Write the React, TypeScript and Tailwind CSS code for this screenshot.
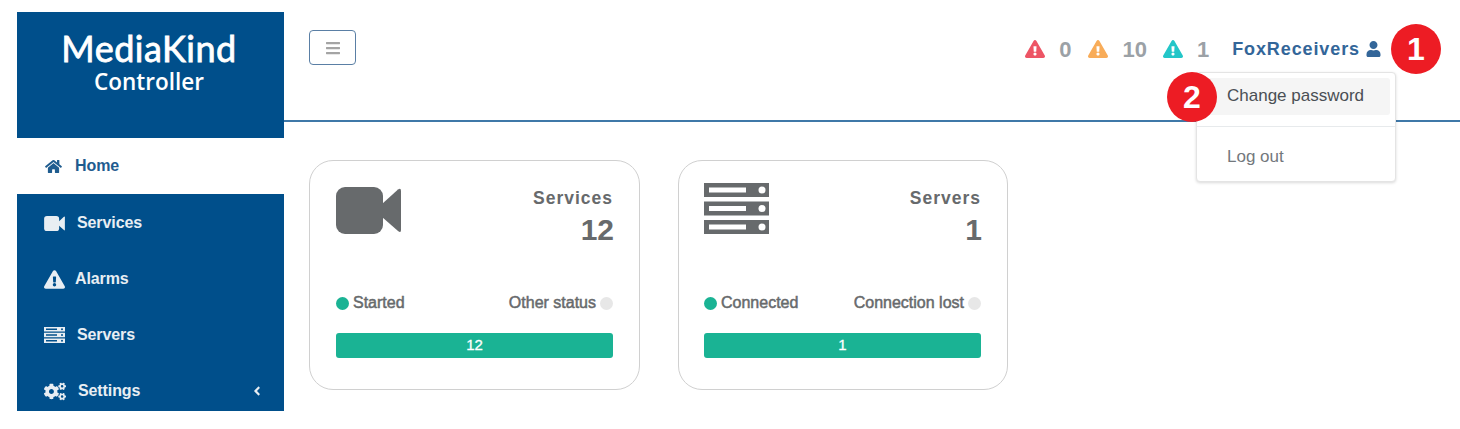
import React from 'react';
import { FaAngleLeft, FaBars, FaCogs, FaExclamationTriangle, FaHome, FaUser } from 'react-icons/fa';

const VideoIcon: React.FC<{ className?: string }> = ({ className }) => (
  <svg viewBox="0 0 65 47" className={className} fill="currentColor">
    <rect x="0" y="0" width="47" height="47" rx="9" />
    <path d="M46 17 L62 2.5 Q65 0.5 65 4 V43 Q65 46.5 62 44 L46 30 Z" />
  </svg>
);

const ServerIcon: React.FC<{ className?: string }> = ({ className }) => (
  <svg viewBox="0 0 65 51" className={className} fill="#676a6c">
    {[0, 18.5, 37].map((y) => (
      <g key={y}>
        <rect x="0" y={y} width="65" height="14" />
        <rect x="5" y={y + 4.5} width="37" height="5" fill="#fff" />
        <circle cx="58" cy={y + 7} r="3.5" fill="#fff" />
      </g>
    ))}
  </svg>
);

function ServerWhite() {
  return (
    <svg viewBox="0 0 21 16" className="w-[21px] h-[16px]" fill="#e8eef3">
      {[0, 5.75, 11.5].map((y) => (
        <g key={y}>
          <rect x="0" y={y} width="21" height="4.5" />
          <rect x="2" y={y + 1.5} width="11" height="1.5" fill="#004f8b" />
          <circle cx="18" cy={y + 2.25} r="1" fill="#004f8b" />
        </g>
      ))}
    </svg>
  );
}

const navItems = [
  { label: 'Services', icon: <VideoIcon className="w-[21px] h-[15px]" />, gap: 'ml-[12px]' },
  { label: 'Alarms', icon: <FaExclamationTriangle className="w-[21px] h-[19px]" />, gap: 'ml-[10px]' },
  { label: 'Servers', icon: <ServerWhite />, gap: 'ml-[12px]' },
  { label: 'Settings', icon: <FaCogs className="w-[22px] h-[19px]" />, gap: 'ml-[12px]' },
];

const Sidebar: React.FC = () => (
  <aside className="w-[267px] shrink-0">
    <div className="h-[126px] bg-[#004f8b] flex flex-col items-center pt-[16px] pr-[3px] text-white">
      <div className="font-['Lato',sans-serif] text-[36px] leading-[40px] tracking-[0.5px] [-webkit-text-stroke:0.8px_white]">MediaKind</div>
      <div className="font-['Open_Sans',sans-serif] font-semibold text-[22.5px] leading-[28px]">Controller</div>
    </div>
    <div className="h-[56px] flex items-center pl-[28px] text-[#1f5c8f] text-[16px] font-bold tracking-[-0.1px]">
      <FaHome className="w-[17px] h-[15px]" />
      <span className="ml-[13px]">Home</span>
    </div>
    <nav className="h-[217px] bg-[#004f8b] pt-[1px]">
      {navItems.map((item) => (
        <div key={item.label} className="h-[56px] flex items-center pl-[27px] pr-[22px] text-[#e8eef3] text-[16px] font-bold tracking-[-0.1px]">
          {item.icon}
          <span className={item.gap}>{item.label}</span>
          {item.label === 'Settings' && <FaAngleLeft className="ml-auto w-[10px] h-[14px]" />}
        </div>
      ))}
    </nav>
  </aside>
);

const Alert: React.FC<{ color: string; count: string; gap: string }> = ({ color, count, gap }) => (
  <div className={`flex items-center ${gap}`}>
    <FaExclamationTriangle className={`w-[20px] h-[18px] ${color}`} />
    <span className="ml-[14px] text-[22px] font-bold text-[#9ba1a6]">{count}</span>
  </div>
);

const Badge: React.FC<{ className: string; children: React.ReactNode }> = ({ className, children }) => (
  <div className={`absolute ${className} z-20 w-[50px] h-[50px] rounded-full bg-[#ed1c24] text-white text-[32px] font-bold flex items-center justify-center`}>
    {children}
  </div>
);

const Header: React.FC = () => (
  <header className="relative h-[110px] border-b-2 border-[#3f78a8] flex items-start pl-[25px]">
    <button className="mt-[18px] w-[47px] h-[35px] rounded-[4px] border border-[#5a7fa5] flex items-center justify-center text-[#a4a4a4]">
      <FaBars className="w-[16px] h-[16px]" />
    </button>
    <div className="ml-auto mt-[27px] mr-[79px] flex items-center h-[20px]">
      <Alert color="text-[#ed5565]" count="0" gap="" />
      <Alert color="text-[#f8ac59]" count="10" gap="ml-[17px]" />
      <Alert color="text-[#23c6c8]" count="1" gap="ml-[16px]" />
      <span className="ml-[23px] text-[18px] font-bold tracking-[0.9px] text-[#336699]">FoxReceivers</span>
      <FaUser className="ml-[6px] w-[15px] h-[16px] text-[#336699]" />
    </div>

    {/* user menu */}
    <div className="absolute left-[912px] top-[60px] w-[200px] h-[110px] bg-white rounded-[4px] border border-[#e4e4e4] shadow-[0_1px_3px_rgba(0,0,0,0.15)] pt-[5px] z-10">
      <div className="mx-[5px] h-[37px] bg-[#f5f5f5] rounded-[3px] pl-[25px] pb-[2px] flex items-center text-[17px] text-[#4a4f54]">
        Change password
      </div>
      <div className="mt-[11px] border-t border-[#e7eaec]" />
      <div className="mt-[12px] pl-[30px] text-[17px] leading-[36px] text-[#73787d]">Log out</div>
    </div>

    <Badge className="left-[1107px] top-[12px]">1</Badge>
    <Badge className="left-[883px] top-[60px]">2</Badge>
  </header>
);

const StatCard: React.FC<{
  icon: React.ReactNode;
  title: string;
  count: string;
  okLabel: string;
  badLabel: string;
  sizeClass: string;
}> = ({ icon, title, count, okLabel, badLabel, sizeClass }) => (
  <div className={`${sizeClass} h-[230px] bg-white border border-[#d0d0d0] rounded-[24px] text-[#676a6c]`}>
    <div className="h-[132px] flex justify-between">
      <div className="pt-[22px]">{icon}</div>
      <div className="text-right pt-[25px]">
        <div className="text-[17.5px] font-bold leading-[24px] tracking-[1px]">{title}</div>
        <div className="text-[30px] font-bold leading-[36px] mt-[2px] -mr-[1px]">{count}</div>
      </div>
    </div>
    <div className="h-[20px] flex items-center justify-between text-[16px] [-webkit-text-stroke:0.5px_#676a6c]">
      <div className="flex items-center">
        <span className="w-[13px] h-[13px] rounded-full bg-[#1ab394]" />
        <span className="ml-[4px]">{okLabel}</span>
      </div>
      <div className="flex items-center">
        <span>{badLabel}</span>
        <span className="ml-[4px] w-[13px] h-[13px] rounded-full bg-[#e7e7e7]" />
      </div>
    </div>
    <div className="mt-[20px] h-[25px] rounded-[3px] bg-[#1ab394] text-white text-[15px] [-webkit-text-stroke:0.3px_white] flex items-center justify-center">
      {count}
    </div>
  </div>
);

export default function App() {
  return (
    <div className="w-[1460px] h-[429px] bg-white overflow-hidden flex pt-[12px] pl-[17px] font-['Liberation_Sans',Arial,sans-serif]">
      <Sidebar />
      <div className="flex-1 flex flex-col">
        <Header />
        <main className="flex gap-[38px] pl-[25px] pt-[38px]">
          <StatCard
            sizeClass="w-[331px] px-[26px]"
            icon={<VideoIcon className="w-[65px] h-[47px] text-[#676a6c] mt-[4px]" />}
            title="Services"
            count="12"
            okLabel="Started"
            badLabel="Other status"
          />
          <StatCard
            sizeClass="w-[330px] pl-[25px] pr-[26px]"
            icon={<ServerIcon className="w-[65px] h-[51px]" />}
            title="Servers"
            count="1"
            okLabel="Connected"
            badLabel="Connection lost"
          />
        </main>
      </div>
    </div>
  );
}
